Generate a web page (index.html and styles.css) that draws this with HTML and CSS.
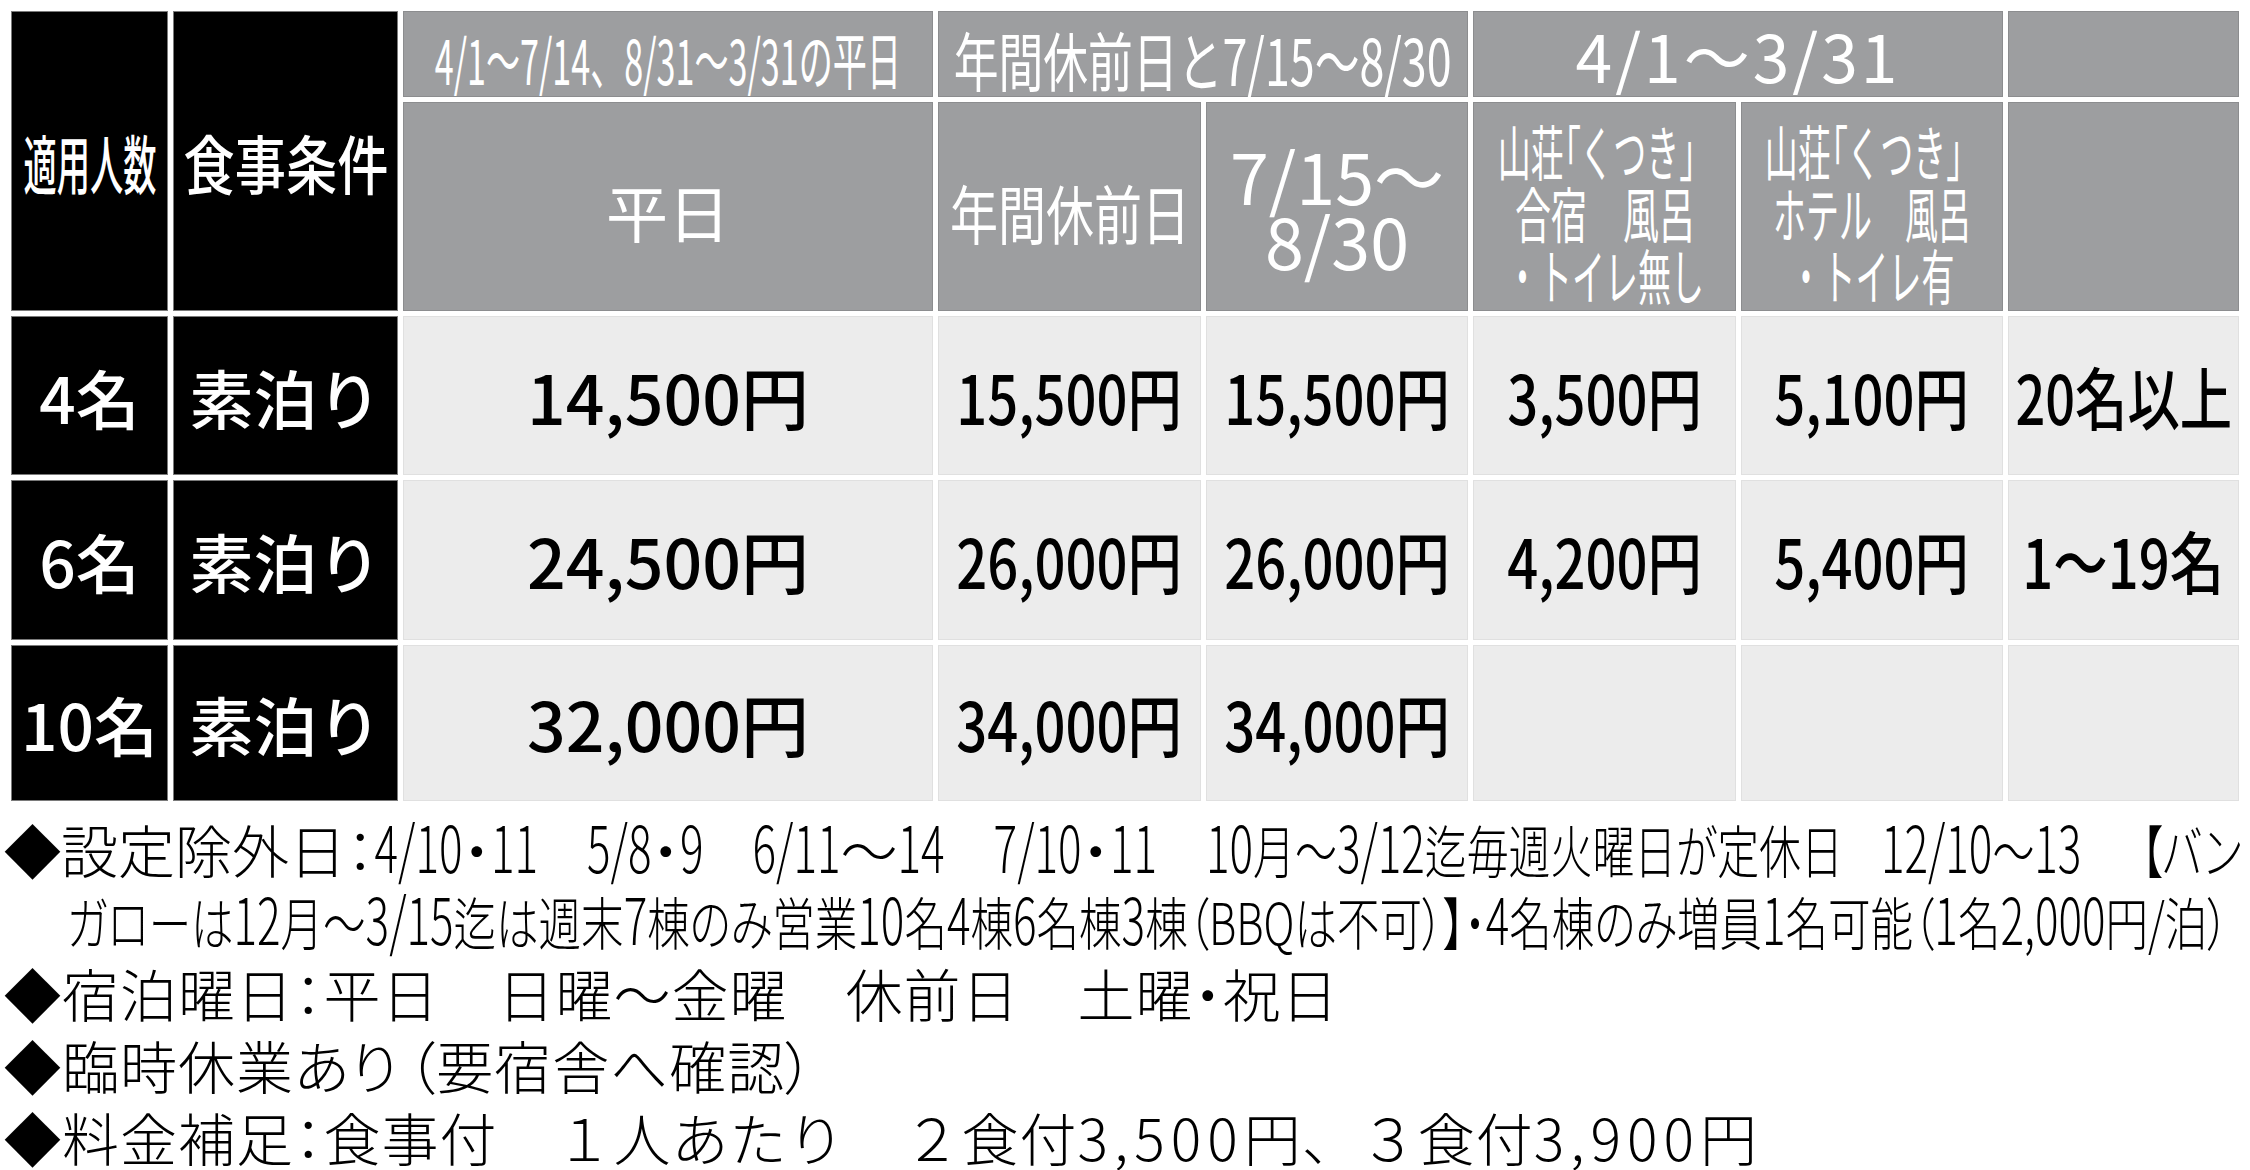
FILE: index.html
```html
<!DOCTYPE html>
<html lang="ja">
<head>
<meta charset="utf-8">
<title>料金表</title>
<link rel="stylesheet" href="styles.css">
</head>
<body>
<div class="page">
  <div class="rate-grid">
    <div class="cell dark rspan"><span class="sq hd-a">適用人数</span></div>
    <div class="cell dark rspan"><span class="sq hd-b">食事条件</span></div>
    <div class="cell head"><span class="sq hd-period1">4/1～7/14、8/31～3/31の平日</span></div>
    <div class="cell head cspan"><span class="sq hd-period2">年間休前日と7/15～8/30</span></div>
    <div class="cell head cspan"><span class="hd-period3">4/1～3/31</span></div>
    <div class="cell head"></div>

    <div class="cell head"><span class="hd-weekday">平日</span></div>
    <div class="cell head"><span class="sq hd-holiday">年間休前日</span></div>
    <div class="cell head"><span class="hd-summer">7/15～<br>8/30</span></div>
    <div class="cell head">
      <div class="hd-lodge">
        <span class="sq l1">山荘<span class="pb">「</span>くつき」</span>
        <span class="sq l2">合宿　風呂</span>
        <span class="sq l3">・トイレ無し</span>
      </div>
    </div>
    <div class="cell head">
      <div class="hd-lodge">
        <span class="sq l1">山荘<span class="pb">「</span>くつき」</span>
        <span class="sq l2b">ホテル　風呂</span>
        <span class="sq l3b">・トイレ有</span>
      </div>
    </div>
    <div class="cell head"></div>

    <div class="cell dark"><span class="persons">4名</span></div>
    <div class="cell dark"><span class="meal">素泊り</span></div>
    <div class="cell body"><span class="price">14,500円</span></div>
    <div class="cell body"><span class="sq price-n">15,500円</span></div>
    <div class="cell body"><span class="sq price-n">15,500円</span></div>
    <div class="cell body"><span class="sq price-n">3,500円</span></div>
    <div class="cell body"><span class="sq price-n">5,100円</span></div>
    <div class="cell body"><span class="sq price-g">20名以上</span></div>

    <div class="cell dark"><span class="persons">6名</span></div>
    <div class="cell dark"><span class="meal">素泊り</span></div>
    <div class="cell body"><span class="price">24,500円</span></div>
    <div class="cell body"><span class="sq price-n">26,000円</span></div>
    <div class="cell body"><span class="sq price-n">26,000円</span></div>
    <div class="cell body"><span class="sq price-n">4,200円</span></div>
    <div class="cell body"><span class="sq price-n">5,400円</span></div>
    <div class="cell body"><span class="sq price-n">1～19名</span></div>

    <div class="cell dark"><span class="persons">10名</span></div>
    <div class="cell dark"><span class="meal">素泊り</span></div>
    <div class="cell body"><span class="price">32,000円</span></div>
    <div class="cell body"><span class="sq price-n">34,000円</span></div>
    <div class="cell body"><span class="sq price-n">34,000円</span></div>
    <div class="cell body"></div>
    <div class="cell body"></div>
    <div class="cell body"></div>
  </div>

  <div class="notes">
    <div class="note-line"><span class="mark">◆</span>設定除外日：<span class="nd">4/10</span>・<span class="nd">11</span><span class="sp"></span><span class="nd">5/8</span>・<span class="nd">9</span><span class="sp"></span><span class="nd">6/11</span>～<span class="nd">14</span><span class="sp"></span><span class="nd">7/10</span>・<span class="nd">11</span><span class="sp"></span><span class="fit fit1"><span class="nd">10</span>月～<span class="nd">3/12</span>迄毎週火曜日が定休日<span class="sp sp-a"></span><span class="nd">12/10</span>～<span class="nd">13</span><span class="sp sp-b"></span>【バン</span></div>
    <div class="note-line cont"><span class="fit fit2">ガローは<span class="nd">12</span>月～<span class="nd">3/15</span>迄は週末<span class="nd">7</span>棟のみ営業<span class="nd">10</span>名<span class="nd">4</span>棟<span class="nd">6</span>名棟<span class="nd">3</span>棟（BBQは不可）】・<span class="nd">4</span>名棟のみ増員<span class="nd">1</span>名可能（<span class="nd">1</span>名<span class="nd">2,000</span>円/泊）</span></div>
    <div class="note-line loose"><span class="mark">◆</span>宿泊曜日：平日　日曜～金曜　休前日　土曜・祝日</div>
    <div class="note-line loose"><span class="mark">◆</span>臨時休業あり<span class="gap-s">（</span>要宿舎へ確認）</div>
    <div class="note-line loose plain"><span class="mark">◆</span>料金補足<span class="colon">：</span>食事付　１人あたり　２食付<span class="wd">3,500</span>円、３食付<span class="wd">3,900</span>円</div>
  </div>
</div>
</body>
</html>
```

FILE: styles.css
```css
* { box-sizing: border-box; }

html, body {
  margin: 0;
  padding: 0;
  background: #ffffff;
}

body {
  font-family: "Noto Sans CJK JP", "Noto Sans", sans-serif;
  color: #000;
}

.page {
  padding: 11px 11px 0 11px;
}

/* ---------- table ---------- */
.rate-grid {
  display: grid;
  grid-template-columns: 157px 225px 530px 263px 262px 263px 262px 231px;
  grid-template-rows: 86px 209px 159px 160px 156px;
  gap: 5px;
}

.cell {
  display: flex;
  align-items: center;
  justify-content: center;
  overflow: visible;
  white-space: nowrap;
  min-width: 0;
  line-height: 1;
}

.rspan { grid-row: span 2; }
.cspan { grid-column: span 2; }

.dark {
  background: #000;
  color: #fff;
  box-shadow: inset 0 0 0 1px #7a7a7a;
}

.head {
  background: #9d9ea0;
  color: #fff;
  box-shadow: inset 0 0 0 1px #8c8d8f;
}

.body {
  background: #ececec;
  color: #000;
  box-shadow: inset 0 0 0 1px #e0e0e0;
}

.sq {
  display: inline-block;
  transform-origin: 50% 50%;
}

.hd-a {
  font-size: 64px;
  font-weight: 500;
  transform: scaleX(0.52);
}

.hd-b {
  font-size: 64px;
  font-weight: 500;
  transform: scaleX(0.8);
}

.hd-period1 {
  font-size: 62px;
  transform: scaleX(0.55);
  margin-top: 8px;
}

.hd-period2 {
  font-size: 64px;
  transform: scaleX(0.70);
  margin-top: 8px;
}

.hd-period3 {
  font-size: 66px;
  letter-spacing: 3px;
  margin-top: 0;
}

.hd-weekday {
  font-size: 62px;
  margin-top: 8px;
}

.hd-holiday {
  font-size: 64px;
  transform: scaleX(0.75);
  margin-top: 8px;
}

.hd-summer {
  font-size: 70px;
  line-height: 65px;
  text-align: center;
  margin-top: 0;
}

.hd-lodge {
  display: flex;
  flex-direction: column;
  align-items: center;
  font-size: 60px;
  line-height: 62px;
  margin-top: 10px;
}

.hd-lodge .pb { font-feature-settings: "palt" 1; }

.hd-lodge .l1 { transform: scaleX(0.55); }
.hd-lodge .l2 { transform: scaleX(0.6); }
.hd-lodge .l3 { transform: scaleX(0.55); }
.hd-lodge .l2b { transform: scaleX(0.55); }
.hd-lodge .l3b { transform: scaleX(0.55); }

.persons {
  font-size: 64px;
  font-weight: 500;
}

.meal {
  font-size: 64px;
  font-weight: 500;
}

.price {
  font-size: 68px;
  font-weight: 500;
}

.price-n {
  font-size: 68px;
  font-weight: 500;
  transform: scaleX(0.8);
}

.price-g {
  font-size: 68px;
  font-weight: 500;
  transform: scaleX(0.77);
}

/* ---------- notes ---------- */
.notes {
  margin-top: 11px;
  margin-left: -7px;
  font-size: 57px;
  line-height: 72px;
  font-weight: 300;
  font-feature-settings: "palt" 1;
}

.note-line {
  white-space: nowrap;
}

.note-line.cont {
  padding-left: 63px;
}

.note-line.loose {
  letter-spacing: 1px;
}

.note-line.plain {
  font-feature-settings: normal;
}

.note-line.plain .colon {
  font-feature-settings: "palt" 1;
}

.gap-s {
  margin-left: 8px;
}

/* narrow, tall digits: small advance, stretched vertically */
.nd {
  display: inline-block;
  font-size: 44px;
  line-height: 1;
  transform: scaleY(1.47);
  transform-origin: 50% 93.6%;
}

.sp {
  display: inline-block;
  width: 49px;
}

/* condensed runs: CJK squeezed, digits kept at the same width */
.fit {
  display: inline-block;
  transform-origin: 0 50%;
  transform: scaleX(var(--s));
}

.fit1 { --s: 0.735; }
.fit2 { --s: 0.746; }

.fit .nd {
  font-size: calc(44px / var(--s));
  transform: scaleY(calc(1.47 * var(--s)));
}

.fit .sp-a { width: calc(38px / var(--s)); }
.fit .sp-b { width: calc(60px / var(--s)); }

.wd {
  letter-spacing: 6px;
}
```
